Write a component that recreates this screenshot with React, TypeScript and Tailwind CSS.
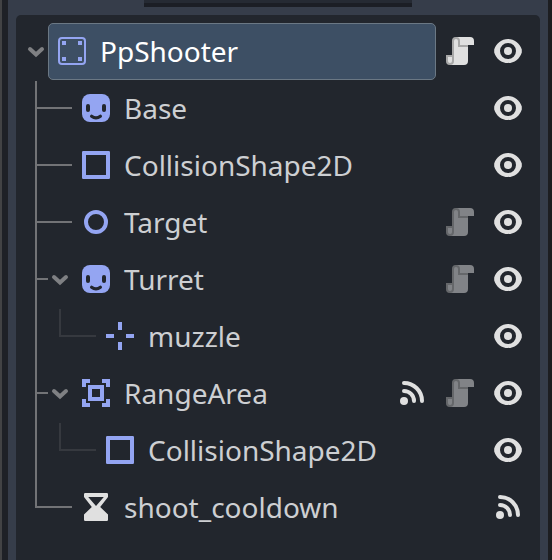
import React from "react";

type Kind = "body" | "sprite" | "shape" | "node" | "marker" | "area" | "timer";
type Action = "signal" | "script" | "scriptDim" | "eye";

interface TreeNode {
  name: string;
  kind: Kind;
  depth: 1 | 2;
  open?: boolean;
  last?: boolean;
  actions: Action[];
}

const nodes: TreeNode[] = [
  { name: "Base", kind: "sprite", depth: 1, actions: ["eye"] },
  { name: "CollisionShape2D", kind: "shape", depth: 1, actions: ["eye"] },
  { name: "Target", kind: "node", depth: 1, actions: ["scriptDim", "eye"] },
  { name: "Turret", kind: "sprite", depth: 1, open: true, actions: ["scriptDim", "eye"] },
  { name: "muzzle", kind: "marker", depth: 2, actions: ["eye"] },
  { name: "RangeArea", kind: "area", depth: 1, open: true, actions: ["signal", "scriptDim", "eye"] },
  { name: "CollisionShape2D", kind: "shape", depth: 2, actions: ["eye"] },
  { name: "shoot_cooldown", kind: "timer", depth: 1, last: true, actions: ["signal"] },
];

const blue = "#94a5f2";
const light = "#e0e0e0";

function NodeIcon({ kind }: { kind: Kind }) {
  return (
    <svg viewBox="0 0 16 16" className="size-8 shrink-0" fill={blue}>
      {kind === "body" && (
        <>
          <rect x="1.5" y="1.5" width="13" height="13" rx="1.5" fill="none" stroke={blue} />
          <path d="M3 3h2v2H3zM11 3h2v2h-2zM3 11h2v2H3zM11 11h2v2h-2z" />
        </>
      )}
      {kind === "sprite" && (
        <>
          <rect x="1" y="1" width="14" height="14" rx="4" />
          <rect x="3" y="6" width="2" height="4" rx="1" fill="#22262d" />
          <rect x="11" y="6" width="2" height="4" rx="1" fill="#22262d" />
          <path d="M5.8 12.1Q8 13.8 10.2 12.1" fill="none" stroke="#22262d" strokeWidth="1.6" strokeLinecap="round" />
        </>
      )}
      {kind === "shape" && (
        <path fillRule="evenodd" d="M1.6 1h12.8a.6.6 0 0 1 .6.6v12.8a.6.6 0 0 1-.6.6H1.6a.6.6 0 0 1-.6-.6V1.6a.6.6 0 0 1 .6-.6zM3 3v10h10V3z" />
      )}
      {kind === "node" && <circle cx="8" cy="8" r="5" fill="none" stroke={blue} strokeWidth="2" />}
      {kind === "marker" && <path d="M1 7h4v2H1zM11 7h4v2h-4zM7 1h2v4H7zM7 11h2v4H7z" />}
      {kind === "area" && (
        <>
          <path d="M1 1h4v2H3v2H1zM11 1h4v4h-2V3h-2zM1 11h2v2h2v2H1zM13 11h2v4h-4v-2h2z" />
          <rect x="5" y="5" width="6" height="6" fill="none" stroke={blue} strokeWidth="2" />
        </>
      )}
      {kind === "timer" && (
        <path
          fill={light}
          fillRule="evenodd"
          d="M2.6 1h10.8a.6.6 0 0 1 .6.6V3l-3.9 5 3.9 3.8v2.6a.6.6 0 0 1-.6.6H2.6a.6.6 0 0 1-.6-.6v-2.6L5.9 8 2 3V1.6a.6.6 0 0 1 .6-.6zM4.1 3L8 7.5 11.9 3z"
        />
      )}
    </svg>
  );
}

function ActionIcon({ action }: { action: Action }) {
  const script = action === "script" || action === "scriptDim";
  return (
    <svg viewBox="0 0 16 16" className="size-8 shrink-0" fill={light}>
      {action === "eye" && (
        <>
          <path fillRule="evenodd" d="M8 2C4.8 2 2.1 4.1 1.1 7.3v1.4C2.1 11.9 4.8 14 8 14s5.9-2.1 6.9-5.3V7.3C13.9 4.1 11.2 2 8 2zm0 2a4 4 0 1 1 0 8 4 4 0 0 1 0-8z" />
          <circle cx="8" cy="8" r="2" />
        </>
      )}
      {action === "signal" && (
        <>
          <circle cx="4" cy="12" r="2" />
          <path d="M4 3a9 9 0 0 1 9 9M4 7a5 5 0 0 1 5 5" fill="none" stroke={light} strokeWidth="2" strokeLinecap="round" />
        </>
      )}
      {script && (
        <g opacity={action === "scriptDim" ? 0.5 : 1}>
          <path d="M6 1a2 2 0 0 0-2 2v7H1v3a2 2 0 0 0 2 2h7a2 2 0 0 0 2-2V5h3V3a2 2 0 0 0-2-2z" />
          <path
            fill="#000000"
            fillOpacity="0.25"
            d="M6 1a2 2 0 0 0-2 2v7H1v3a2 2 0 0 0 4 0V3a1 1 0 0 1 2 0v3h5V5H8V3a2 2 0 0 0-2-2zM2 11h2v2a1 1 0 0 1-2 0z"
          />
        </g>
      )}
    </svg>
  );
}

function Guides({ node }: { node: TreeNode }) {
  const nested = node.depth === 2;
  const width = nested ? 88 : 64;
  return (
    <svg width={width} height="57" viewBox={`0 0 ${width} 57`} fill="none" stroke="#727376" strokeWidth="2" className="shrink-0">
      <path d={node.last ? "M20 0V29" : node.name === "Base" ? "M20 1V57" : "M20 0V57"} />
      {nested ? (
        <path d="M44 1V28H80" stroke="#36393f" />
      ) : (
        <path d={node.open ? "M20 28H32" : "M20 28H56"} />
      )}
      {node.open && <path d="M38 26l6 5.5 6-5.5" stroke="#7f8083" strokeWidth="4" strokeLinecap="round" />}
    </svg>
  );
}

function Actions({ list }: { list: Action[] }) {
  return (
    <div className="ml-auto flex gap-4 pt-3 pr-4">
      {list.map((a) => (
        <ActionIcon key={a} action={a} />
      ))}
    </div>
  );
}

export default function App() {
  return (
    <div className="flex h-[560px] w-[552px] overflow-hidden bg-[#363d4a] font-['Noto_Sans',sans-serif] text-[28px] leading-[57px] text-[#cdcfd2]">
      <div className="w-2 shrink-0 border-l-2 border-[#424345] bg-[#1e2127]" />
      <main className="flex min-w-0 flex-1 flex-col px-2">
        <div className="ml-32 h-[7px] w-[268px] shrink-0 border-b-4 border-[#1b1e25] bg-[#252a33]" />
        <section className="mt-2 w-[524px] flex-1 rounded-t-[5px] bg-[#22262d] pt-2">
          <div className="flex h-[57px]">
            <svg width="32" height="57" viewBox="0 0 32 57" className="shrink-0" fill="none" stroke="#7f8083" strokeWidth="4" strokeLinecap="round">
              <path d="M14 26l6 5.5 6-5.5" />
            </svg>
            <div className="flex w-[388px] rounded-[5px] border border-[#6b7884] bg-[#3d4f64] pl-[7px] leading-[55px] text-white">
              <div className="pt-[11px]">
                <NodeIcon kind="body" />
              </div>
              <span className="pl-3">PpShooter</span>
            </div>
            <Actions list={["script", "eye"]} />
          </div>
          {nodes.map((node, i) => (
            <div key={i} className="flex h-[57px]">
              <Guides node={node} />
              <div className="pt-3">
                <NodeIcon kind={node.kind} />
              </div>
              <span className="pl-3">{node.name}</span>
              <Actions list={node.actions} />
            </div>
          ))}
        </section>
      </main>
      <div className="w-1 shrink-0 bg-[#1d1e21]" />
    </div>
  );
}
